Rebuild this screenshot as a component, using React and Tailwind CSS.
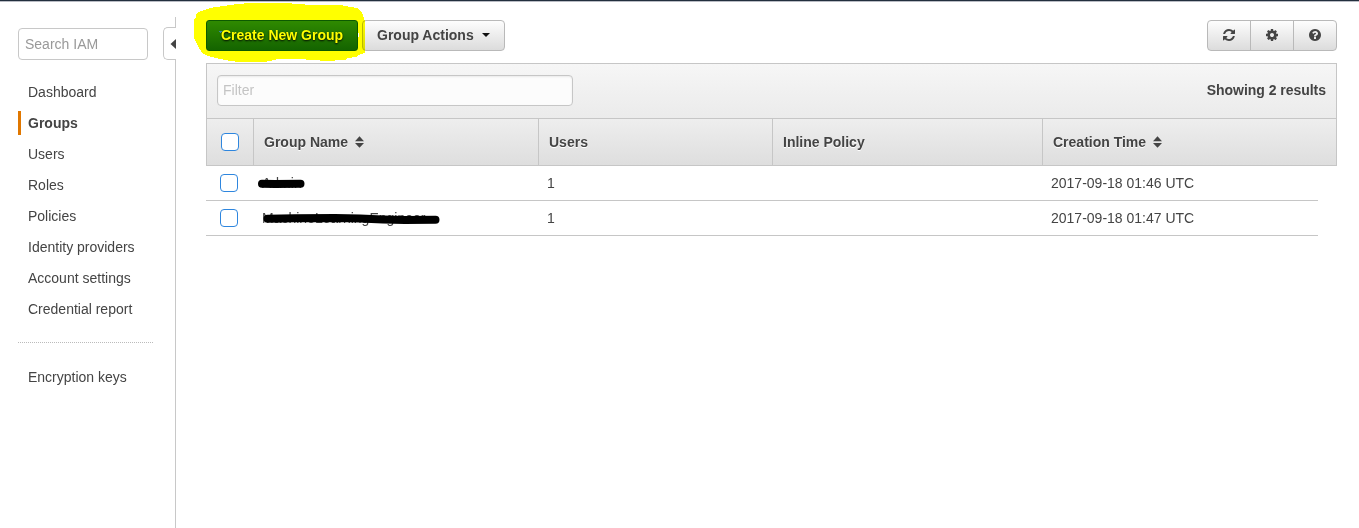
import React from "react";

const navItems = ["Dashboard", "Groups", "Users", "Roles", "Policies", "Identity providers", "Account settings", "Credential report"];

const iconPaths = {
  refresh:
    "M1639 1056q0 5-1 7-64 268-268 434.5t-478 166.5q-146 0-282.5-55t-243.5-157l-129 129q-19 19-45 19t-45-19-19-45v-448q0-26 19-45t45-19h448q26 0 45 19t19 45-19 45l-137 137q71 66 161 102t187 36q134 0 250-65t186-179q11-17 53-117 8-23 30-23h192q13 0 22.5 9.5t9.5 22.5zm25-800v448q0 26-19 45t-45 19h-448q-26 0-45-19t-19-45 19-45l138-138q-148-137-349-137-134 0-250 65t-186 179q-11 17-53 117-8 23-30 23h-199q-13 0-22.5-9.5t-9.5-22.5v-7q65-268 270-434.5t480-166.5q146 0 284 55.5t245 156.5l130-129q19-19 45-19t45 19 19 45z",
  cog: "M1152 896q0-106-75-181t-181-75-181 75-75 181 75 181 181 75 181-75 75-181zm512-109v222q0 12-8 23t-20 13l-185 28q-19 54-39 91 35 50 107 138 10 12 10 25t-9 23q-27 37-99 108t-94 71q-12 0-26-9l-138-108q-44 23-91 38-16 136-29 186-7 28-36 28h-222q-14 0-24.5-8.5t-11.5-21.5l-28-184q-49-16-90-37l-141 107q-10 9-25 9-14 0-25-11-126-114-165-168-7-10-7-23 0-12 8-23 15-21 51-66.5t54-70.5q-27-50-41-99l-183-27q-13-2-21-12.5t-8-23.5v-222q0-12 8-23t19-13l186-28q14-46 39-92-40-57-107-138-10-12-10-24 0-10 9-23 26-36 98.5-107.5t94.5-71.5q13 0 26 10l138 107q44-23 91-38 16-136 29-186 7-28 36-28h222q14 0 24.5 8.5t11.5 21.5l28 184q49 16 90 37l142-107q9-9 24-9 13 0 25 10 129 119 165 170 7 8 7 22 0 12-8 23-15 21-51 66.5t-54 70.5q26 50 41 98l183 28q13 2 21 12.5t8 23.5z",
  help: "M1024 1376v-192q0-14-9-23t-23-9h-192q-14 0-23 9t-9 23v192q0 14 9 23t23 9h192q14 0 23-9t9-23zm256-672q0-88-55.5-163t-138.5-116-170-41q-243 0-371 213-15 24 8 42l132 100q7 6 19 6 16 0 25-12 53-68 86-92 34-24 86-24 48 0 85.5 26t37.5 59q0 38-20 61t-68 45q-63 28-115.5 86.5t-52.5 125.5v36q0 14 9 23t23 9h192q14 0 23-9t9-23q0-19 21.5-49.5t54.5-49.5q32-18 49-28.5t46-35 44.5-48 28-60.5 12.5-81zm384 192q0 209-103 385.5t-279.5 279.5-385.5 103-385.5-103-279.5-279.5-103-385.5 103-385.5 279.5-279.5 385.5-103 385.5 103 279.5 279.5 103 385.5z",
};

function Icon({ name }) {
  return (
    <svg viewBox="0 0 1792 1792" className="size-[14px]" fill="currentColor">
      <path d={iconPaths[name]} />
    </svg>
  );
}

function Checkbox() {
  return <span role="checkbox" aria-checked="false" className="block size-[18px] rounded-[4px] border border-[#2e86de] bg-white" />;
}

function SortIcon() {
  return (
    <svg viewBox="0 0 9 12" className="ml-[7px] h-3 w-[9px]" fill="currentColor">
      <path d="M4.5 0.3 9 5.2H0zM4.5 11.7 0 6.9h9z" />
    </svg>
  );
}

function Highlight() {
  return (
    <>
      <svg
        viewBox="0 0 180 66"
        className="pointer-events-none absolute top-[-20px] left-[-16px] h-[66px] w-[180px] mix-blend-multiply"
        shapeRendering="crispEdges"
      >
        <path
          fill="#ffff00"
          d="M6 14 11 11 20 8 33 6 47 4 60 3 98 3 105 4 125 5 150 5 160 7 168 8 172 13 174 18 175 22V53L168 55 166 57 158 58 155 60 147 60 143 61H132L128 60 104 59H88L84 60 75 62H50L40 61 30 59 18 56 12 53 8 46 6 42 4 38V19L6 17Z"
        />
      </svg>
      <svg viewBox="0 0 140 10" className="pointer-events-none absolute top-[10px] left-[13px] h-[10px] w-[140px]">
        <path fill="#3a7fb0" d="M0 1h3v1H2v1H1V2H0z" />
        <path fill="#fff" d="M139 3h1v4h-1z" />
      </svg>
    </>
  );
}

function Sidebar() {
  return (
    <aside className="flex w-[176px] shrink-0">
      <div className="flex w-[163px] flex-col pt-[26px] pl-[18px]">
        <div className="flex h-8 w-[130px] items-center rounded-[4px] border border-[#c8c8c8] px-1.5 text-[#999]">Search IAM</div>
        <nav className="mt-[20px] flex flex-col gap-[7px]">
          {navItems.map((item) => (
            <a
              key={item}
              className={
                item === "Groups"
                  ? "flex h-6 items-center border-l-[3px] border-[#e07700] pl-[7px] font-bold"
                  : "flex h-6 items-center pl-[10px]"
              }
            >
              {item}
            </a>
          ))}
        </nav>
        <div className="mt-[21px] w-[135px] border-t border-dotted border-[#bbb]" />
        <a className="mt-[22px] flex h-6 items-center pl-[10px]">Encryption keys</a>
      </div>
      <div className="flex w-[13px] flex-col pt-[15px]">
        <div className="h-[10px] border-r border-[#c8c8c8]" />
        <div className="flex h-[33px] items-center justify-end rounded-l-[5px] border-y border-l border-[#c8c8c8]">
          <svg viewBox="0 0 6 10" className="h-[10px] w-[6px]" fill="#444">
            <path d="M6 0v10L0.5 5z" />
          </svg>
        </div>
        <div className="flex-1 border-r border-[#c8c8c8]" />
      </div>
    </aside>
  );
}

function Toolbar() {
  return (
    <div className="flex h-[31px] justify-between font-bold">
      <div className="relative flex gap-[4px]">
        <button className="flex w-[152px] items-center justify-center rounded-[3px] border border-[#0c5a00] bg-linear-to-b from-[#2f8a00] to-[#146400] pb-[2px] text-white [text-shadow:0_1px_2px_#000]">
          Create New Group
        </button>
        <button className="flex w-[143px] items-center rounded-[4px] border border-[#b9b9b9] bg-linear-to-b from-[#fdfdfd] to-[#dcdcdc] pb-[2px] pl-[14px]">
          Group Actions
          <svg viewBox="0 0 8 4" className="ml-[8px] h-1 w-2" fill="#111">
            <path d="M0 0h8L4 4z" />
          </svg>
        </button>
        <Highlight />
      </div>
      <div className="flex w-[130px] divide-x divide-[#b9b9b9] rounded-[4px] border border-[#b9b9b9] bg-linear-to-b from-[#fdfdfd] to-[#dcdcdc]">
        <button className="flex w-[43px] items-center justify-center pb-px"><Icon name="refresh" /></button>
        <button className="flex w-[43px] items-center justify-center pb-px"><Icon name="cog" /></button>
        <button className="flex flex-1 items-center justify-center pb-px"><Icon name="help" /></button>
      </div>
    </div>
  );
}

const groups = [
  {
    name: "Admin",
    time: "2017-09-18 01:46 UTC",
    mark: "M7 10.8 20 11 45.5 10.8",
  },
  {
    name: "MachineLearningEngineer",
    time: "2017-09-18 01:47 UTC",
    mark: "M12.5 10.8 40 10.3 80 10 105 10.5 128 11.5 150 12 180.5 11.8",
  },
];

function GroupsTable() {
  return (
    <section className="mt-3">
      <div className="border border-[#c6c6c6]">
        <div className="flex h-[54px] items-center justify-between bg-linear-to-b from-[#f6f6f6] to-[#ebebeb] px-[10px] pb-[2px]">
          <div className="flex h-[31px] w-[356px] items-center rounded-[4px] border border-[#c6c6c6] bg-[#fcfcfc] px-[5px] text-[#c4c4c4] shadow-[inset_0_1px_2px_rgba(0,0,0,0.08)]">
            Filter
          </div>
          <div className="font-bold tracking-[-0.03px]">Showing 2 results</div>
        </div>
        <div className="grid h-[47px] grid-cols-[47px_285px_234px_270px_1fr] divide-x divide-[#c6c6c6] border-t border-[#c6c6c6] bg-linear-to-b from-[#eeeeee] to-[#dedede] font-bold [text-shadow:0_1px_0_#fff]">
          <div className="flex items-center pl-[14px]"><Checkbox /></div>
          <div className="flex items-center pl-[10px]">Group Name<SortIcon /></div>
          <div className="flex items-center pl-[10px]">Users</div>
          <div className="flex items-center pl-[10px]">Inline Policy</div>
          <div className="flex items-center pl-[10px]">Creation Time<SortIcon /></div>
        </div>
      </div>
      {groups.map((group) => (
        <div key={group.name} className="grid h-[35px] w-[1112px] grid-cols-[46px_285px_234px_270px_1fr] items-center border-b border-[#c6c6c6]">
          <div className="pl-[14px]"><Checkbox /></div>
          <div className="relative pl-[10px]">
            {group.name}
            <svg viewBox="0 0 200 24" className="absolute top-0 left-[3px] h-6 w-[200px]" fill="none" stroke="#000" strokeWidth="8" strokeLinecap="round" strokeLinejoin="round">
              <path d={group.mark} />
            </svg>
          </div>
          <div className="pl-[10px]">1</div>
          <div />
          <div className="pl-[10px]">{group.time}</div>
        </div>
      ))}
    </section>
  );
}

export default function App() {
  return (
    <div className="flex h-[528px] w-[1359px] flex-col overflow-hidden bg-white font-['Liberation_Sans',Arial,sans-serif] text-[14px] leading-5 text-[#444]">
      <header className="h-[2px] shrink-0 border-b border-[#b9bcc4] bg-[#232f3e]" />
      <div className="flex min-h-0 flex-1">
        <Sidebar />
        <main className="ml-[30px] w-[1131px] pt-[18px]">
          <Toolbar />
          <GroupsTable />
        </main>
      </div>
    </div>
  );
}
